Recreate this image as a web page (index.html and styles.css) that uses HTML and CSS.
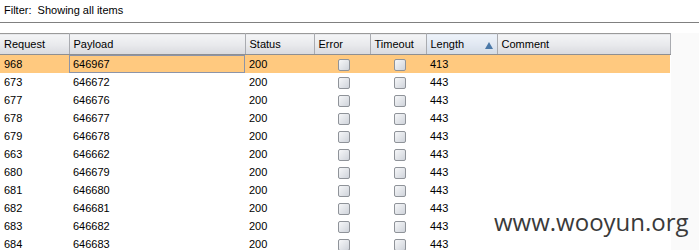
FILE: index.html
```html
<!DOCTYPE html>
<html>
<head>
<meta charset="utf-8">
<link rel="stylesheet" href="styles.css">
</head>
<body>
<div class="filter">Filter:&nbsp; Showing all items</div>
<div class="spacer"></div>
<table class="grid">
  <colgroup>
    <col class="c-req"><col class="c-pay"><col class="c-status"><col class="c-err"><col class="c-to"><col class="c-len"><col class="c-com">
  </colgroup>
  <thead>
    <tr>
      <th>Request</th><th>Payload</th><th>Status</th><th>Error</th><th>Timeout</th><th class="sorted">Length<span class="arrow"></span></th><th>Comment</th>
    </tr>
  </thead>
  <tbody>
    <tr class="sel"><td>968</td><td class="focus">646967</td><td>200</td><td class="cb"><span class="box"></span></td><td class="cb"><span class="box"></span></td><td>413</td><td></td></tr>
    <tr><td>673</td><td>646672</td><td>200</td><td class="cb"><span class="box"></span></td><td class="cb"><span class="box"></span></td><td>443</td><td></td></tr>
    <tr><td>677</td><td>646676</td><td>200</td><td class="cb"><span class="box"></span></td><td class="cb"><span class="box"></span></td><td>443</td><td></td></tr>
    <tr><td>678</td><td>646677</td><td>200</td><td class="cb"><span class="box"></span></td><td class="cb"><span class="box"></span></td><td>443</td><td></td></tr>
    <tr><td>679</td><td>646678</td><td>200</td><td class="cb"><span class="box"></span></td><td class="cb"><span class="box"></span></td><td>443</td><td></td></tr>
    <tr><td>663</td><td>646662</td><td>200</td><td class="cb"><span class="box"></span></td><td class="cb"><span class="box"></span></td><td>443</td><td></td></tr>
    <tr><td>680</td><td>646679</td><td>200</td><td class="cb"><span class="box"></span></td><td class="cb"><span class="box"></span></td><td>443</td><td></td></tr>
    <tr><td>681</td><td>646680</td><td>200</td><td class="cb"><span class="box"></span></td><td class="cb"><span class="box"></span></td><td>443</td><td></td></tr>
    <tr><td>682</td><td>646681</td><td>200</td><td class="cb"><span class="box"></span></td><td class="cb"><span class="box"></span></td><td>443</td><td></td></tr>
    <tr><td>683</td><td>646682</td><td>200</td><td class="cb"><span class="box"></span></td><td class="cb"><span class="box"></span></td><td>443</td><td></td></tr>
    <tr><td>684</td><td>646683</td><td>200</td><td class="cb"><span class="box"></span></td><td class="cb"><span class="box"></span></td><td>443</td><td></td></tr>
  </tbody>
</table>
<div class="watermark">www.wooyun.org</div>
</body>
</html>
```
FILE: styles.css
```css
html, body {
  margin: 0;
  padding: 0;
  background: #fafafa;
  font-family: "Liberation Sans", Arial, sans-serif;
  font-size: 11px;
  color: #000;
  overflow: hidden;
  height: 250px;
}
body { position: relative; }
.filter {
  height: 22px;
  line-height: 20px;
  padding-left: 4px;
  background: #fff;
  border-bottom: 1px solid #808080;
}
.spacer {
  height: 10px;
  background: #fff;
}
.grid {
  width: 670px;
  table-layout: fixed;
  border-collapse: collapse;
  background: #fff;
}
.c-req { width: 69px; }
.c-pay { width: 176px; }
.c-status { width: 69px; }
.c-err { width: 56px; }
.c-to { width: 56px; }
.c-len { width: 71px; }
.c-com { width: 173px; }
.grid th {
  height: 20px;
  padding: 0 0 0 4px;
  text-align: left;
  font-weight: normal;
  background: linear-gradient(#f4f5f7 0%, #e9eaed 50%, #d9dade 100%);
  border-top: 1px solid #9a9a9a;
  border-bottom: 1px solid #8e8f92;
  border-right: 1px solid #a9abb0;
  white-space: nowrap;
}
.grid th.sorted {
  position: relative;
  background: linear-gradient(#eef3fa 0%, #e1e8f2 50%, #d3dbe6 100%);
}
.arrow {
  position: absolute;
  right: 4px;
  top: 8px;
  width: 0;
  height: 0;
  border-left: 4px solid transparent;
  border-right: 4px solid transparent;
  border-bottom: 7px solid #4a78a8;
}
.grid td {
  height: 18px;
  padding: 0 0 0 4px;
  white-space: nowrap;
  vertical-align: middle;
}
.grid td.cb {
  padding: 0 0 0 4px;
  text-align: center;
}
.grid tr.sel td { background: #ffc97f; }
.grid tr.sel td.focus { box-shadow: inset 0 0 0 1px #8c94a8; }
.box {
  display: inline-block;
  width: 10px;
  height: 10px;
  vertical-align: middle;
  border: 1px solid #8f9399;
  border-radius: 2px;
  background: linear-gradient(135deg, #f6f7f9 0%, #dfe2e7 60%, #cfd3da 100%);
}
.watermark {
  position: absolute;
  left: 494px;
  top: 205px;
  font-family: "Open Sans", sans-serif;
  font-size: 24px;
  color: #3a3a3a;
  background: transparent;
  letter-spacing: 0;
}
```
